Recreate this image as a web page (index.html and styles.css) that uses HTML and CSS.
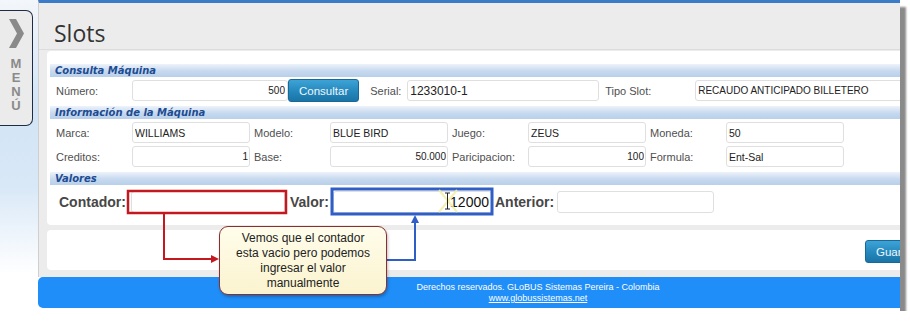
FILE: index.html
```html
<!DOCTYPE html>
<html lang="es">

<head>
    <meta charset="UTF-8">
    <meta name="viewport" content="width=device-width, initial-scale=1.0">
    <title>Slots</title>
    <link rel="stylesheet" href="styles.css">
</head>

<body>
    <div class="shot">
        <aside class="side">
            <div class="menu-tab">
                <svg class="chevron" width="16" height="29" viewBox="0 0 16 29">
                    <polygon points="0,0 7,0 15,14.5 7,29 0,29 8,14.5" fill="#8a8a8a" />
                </svg>
                <span class="menu-letters">M</span>
                <span class="menu-letters">E</span>
                <span class="menu-letters">N</span>
                <span class="menu-letters">Ú</span>
            </div>
        </aside>

        <div class="main">
            <div class="content">
                <div class="title-bar">
                    <h1>Slots</h1>
                </div>

                <div class="panel">
                    <div class="sec">Consulta Máquina</div>
                    <div class="row row-query">
                        <label class="lbl">Número:</label>
                        <input class="in in-num num" value="500">
                        <button class="btn">Consultar</button>
                        <label class="lbl lbl-serial">Serial:</label>
                        <input class="in in-serial" value="1233010-1">
                        <label class="lbl lbl-tipo">Tipo Slot:</label>
                        <input class="in in-tipo" value="RECAUDO ANTICIPADO BILLETERO">
                    </div>

                    <div class="sec sec-gap">Información de la Máquina</div>
                    <div class="row row-info">
                        <label class="lbl">Marca:</label>
                        <input class="in in-info" value="WILLIAMS">
                        <label class="lbl">Modelo:</label>
                        <input class="in in-info" value="BLUE BIRD">
                        <label class="lbl">Juego:</label>
                        <input class="in in-info" value="ZEUS">
                        <label class="lbl">Moneda:</label>
                        <input class="in in-info" value="50">
                    </div>
                    <div class="row row-info">
                        <label class="lbl">Creditos:</label>
                        <input class="in in-info num" value="1">
                        <label class="lbl">Base:</label>
                        <input class="in in-info num" value="50.000">
                        <label class="lbl">Paricipacion:</label>
                        <input class="in in-info num" value="100">
                        <label class="lbl">Formula:</label>
                        <input class="in in-info" value="Ent-Sal">
                    </div>

                    <div class="sec sec-gap2">Valores</div>
                    <div class="row row-values">
                        <label class="big-lbl lbl-contador">Contador:</label>
                        <input class="in in-val in-contador" value="">
                        <label class="big-lbl lbl-valor">Valor:</label>
                        <input class="in in-val in-valor num" value="12000">
                        <label class="big-lbl lbl-anterior">Anterior:</label>
                        <input class="in in-val in-anterior" value="">
                    </div>
                </div>

                <div class="panel actions">
                    <button class="btn btn-save">Guardar</button>
                </div>
            </div>

            <footer class="footer">
                Derechos reservados. GLoBUS Sistemas Pereira - Colombia<br>
                <a href="#">www.globussistemas.net</a>
            </footer>
        </div>

        <!-- annotations drawn over the capture -->
        <svg class="notes" width="900" height="311" viewBox="0 0 900 311">
            <rect x="128" y="191" width="158" height="22" fill="none" stroke="#c3181f" stroke-width="2.5" />
            <rect x="332" y="189" width="160" height="25" fill="none" stroke="#2e5ec6" stroke-width="3" />
            <path d="M164 214 V259 H212" fill="none" stroke="#c3181f" stroke-width="2" />
            <polygon points="211,255 219,259 211,263" fill="#c3181f" />
            <path d="M387 260 H415 V222" fill="none" stroke="#2e5ec6" stroke-width="2" />
            <polygon points="411,223 415,215 419,223" fill="#2e5ec6" />
            <path d="M439 190 L457 212 M457 190 L439 212" stroke="#f3efa6" stroke-width="2" opacity="0.85" />
            <path d="M445 193 H450 M447.5 193 V209 M445 209 H450" stroke="#222" stroke-width="1" fill="none" />
        </svg>

        <div class="callout">
            Vemos que el contador<br>
            esta vacio pero podemos<br>
            ingresar el valor<br>
            manualmente
        </div>
    </div>
</body>

</html>
```

FILE: styles.css
```css
* {
    box-sizing: border-box;
}

body {
    margin: 0;
    background: #fff;
    font-family: "Liberation Sans", Arial, sans-serif;
}

.shot {
    position: relative;
    width: 900px;
    height: 311px;
    display: flex;
    overflow: hidden;
    background: #fff;
    box-shadow: 6px 7px 2px #8a8a8a;
}

/* left menu strip */
.side {
    width: 38px;
    flex: none;
    background: linear-gradient(#f3f6fa 0, #d2e4f6 35%, #d9e8f7 60%, #fff 88%);
}

.menu-tab {
    margin-top: 10px;
    width: 33px;
    height: 116px;
    background: #ebebeb;
    border: 1.5px solid #1f2c46;
    border-left: 0;
    border-radius: 0 7px 7px 0;
    display: flex;
    flex-direction: column;
    align-items: center;
    padding-top: 8px;
}

.chevron {
    margin: 0 0 9px 1px;
}

.menu-letters {
    font-weight: bold;
    font-size: 13px;
    line-height: 14px;
    height: 14px;
    color: #8a8a8a;
}

/* main column */
.main {
    width: 1000px;
    flex: none;
    display: flex;
    flex-direction: column;
}

.content {
    background: #ececec;
    border-top: 3px solid #3b7bc8;
    border-left: 1px solid #cfcfcf;
    padding-bottom: 7px;
}

.title-bar {
    padding: 16px 0 2px 15px;
    border-bottom: 1px solid #dcdcdc;
}

.title-bar h1 {
    margin: 0;
    font-family: "Open Sans", sans-serif;
    font-weight: normal;
    font-size: 23px;
    line-height: 28px;
    color: #333;
}

.panel {
    background: #fff;
    margin: 1px 0 0 8px;
    border-radius: 4px;
    padding: 13px 0 11px 3px;
}

.sec {
    height: 13px;
    line-height: 13px;
    padding-left: 5px;
    background: linear-gradient(#edf3fa, #c6d9ef 55%, #b9cfea);
    font-family: "DejaVu Sans", Verdana, sans-serif;
    font-style: italic;
    font-weight: bold;
    font-size: 10px;
    color: #1d4c92;
}

.sec-gap {
    margin-top: 4px;
}

.sec-gap2 {
    margin-top: 5px;
}

.row {
    display: flex;
    align-items: center;
    padding-left: 2px;
}

.row-query {
    margin-top: 2px;
    height: 23px;
}

.row-info {
    margin-top: 3px;
    height: 21px;
}

.row-values {
    margin-top: 5px;
    height: 24px;
}

.lbl {
    width: 80px;
    flex: none;
    padding-left: 4px;
    font-size: 11px;
    color: #4f4f4f;
}

.lbl-serial {
    width: 48px;
    padding-left: 11px;
}

.lbl-tipo {
    width: 96px;
    padding-left: 6px;
}

.in {
    flex: none;
    height: 21px;
    padding: 0 2px;
    border: 1px solid #dfdfdf;
    border-radius: 3px;
    background: #fff;
    font-family: "Liberation Sans", Arial, sans-serif;
    font-size: 10.5px;
    color: #222;
    outline: none;
}

.num {
    text-align: right;
}

.in-num {
    width: 156px;
    font-size: 10px;
}

.in-serial {
    width: 192px;
    font-size: 12px;
}

.in-tipo {
    width: 227px;
    font-size: 10px;
}

.in-info {
    width: 118px;
}

.in-info.num {
    font-size: 10px;
    padding-right: 1px;
}

.big-lbl {
    flex: none;
    font-size: 14px;
    font-weight: bold;
    color: #474747;
}

.lbl-contador {
    width: 79px;
    padding-left: 7px;
}

.lbl-valor {
    width: 48px;
    padding-left: 5px;
}

.lbl-anterior {
    width: 65px;
    padding-left: 3px;
}

.in-val {
    height: 22px;
    font-size: 14px;
    color: #111;
}

.in-contador {
    width: 154px;
}

.in-valor {
    width: 159px;
    padding-right: 2px;
}

.in-anterior {
    width: 157px;
}

.btn {
    flex: none;
    height: 23px;
    padding: 0 10px;
    border: 1px solid #17699a;
    border-radius: 3px;
    background: linear-gradient(#3da3d6, #2385ba 60%, #1b74a6);
    font-family: "Liberation Sans", Arial, sans-serif;
    font-size: 11.5px;
    color: #eef7fc;
}

.actions {
    margin-top: 5px;
    height: 40px;
    padding: 10px 0 0 818px;
}

.footer {
    height: 31px;
    padding-top: 5px;
    background: #1f8ef8;
    border-radius: 5px;
    text-align: center;
    font-size: 9px;
    line-height: 11px;
    color: #fff;
}

.footer a {
    color: #fff;
}

/* overlay annotations */
.notes {
    position: absolute;
    left: 0;
    top: 0;
    pointer-events: none;
}

.callout {
    position: absolute;
    left: 219px;
    top: 226px;
    width: 168px;
    height: 69px;
    padding-top: 4px;
    border: 1px solid #8a2f2f;
    border-radius: 9px;
    background: linear-gradient(#fffdeb, #fbf3cf);
    box-shadow: 1px 2px 3px rgba(0, 0, 0, 0.25);
    text-align: center;
    font-size: 12px;
    line-height: 15px;
    color: #222;
}
```
